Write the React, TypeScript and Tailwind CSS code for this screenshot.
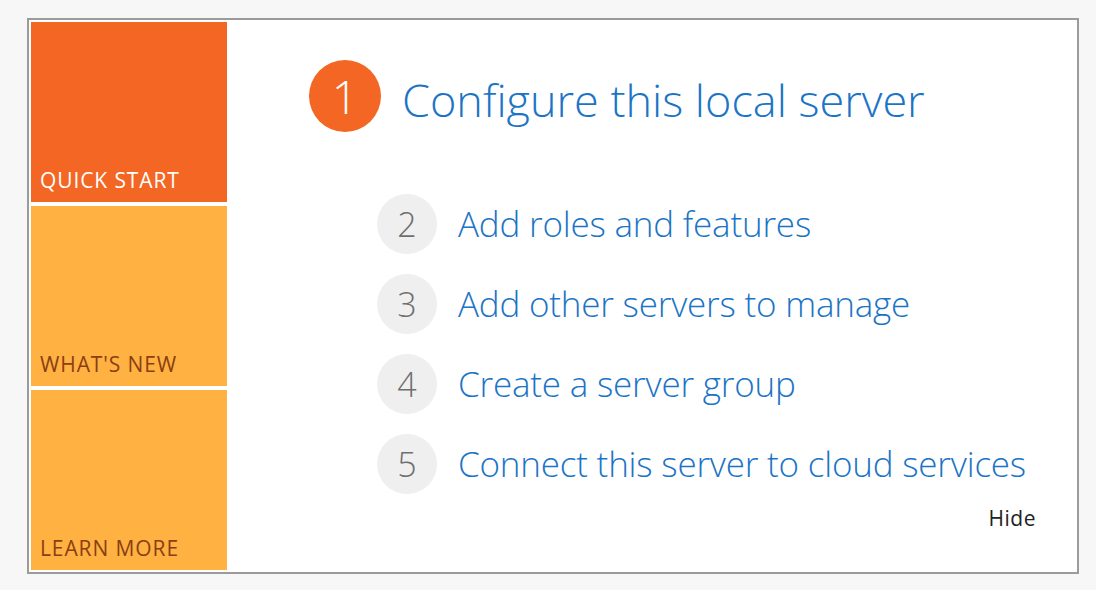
import React from "react";

const font = { fontFamily: '"Open Sans", "Noto Sans", sans-serif' };

function Tile({ label, bg, text }: { label: string; bg: string; text: string }) {
  return (
    <div className={`h-[180px] w-[196px] flex items-end pl-[9px] pb-[10px] ${bg}`}>
      <span className={`text-[21px] leading-[24px] tracking-[0.9px] ${text}`}>{label}</span>
    </div>
  );
}

const steps = [
  { n: "2", t: "Add roles and features" },
  { n: "3", t: "Add other servers to manage" },
  { n: "4", t: "Create a server group" },
  { n: "5", t: "Connect this server to cloud services" },
];

export default function App() {
  return (
    <div className="w-[1096px] h-[590px] bg-[#f7f7f7] pl-[27px] pt-[18px]" style={font}>
      <div className="w-[1052px] h-[556px] border-2 border-[#9b9b9b] bg-white p-[2px] flex">
        <div className="flex flex-col gap-[4px]">
          <Tile label="QUICK START" bg="bg-[#f36623]" text="text-white" />
          <Tile label="WHAT'S NEW" bg="bg-[#ffb142]" text="text-[#8a3f12]" />
          <Tile label="LEARN MORE" bg="bg-[#ffb142]" text="text-[#8a3f12]" />
        </div>
        <div className="flex-1 flex flex-col pl-[82px] pt-[38px] pr-[39px]">
          <div className="flex items-center gap-[21px]">
            <div className="w-[72px] h-[72px] rounded-full bg-[#f36623] flex items-center justify-center">
              <span className="text-white font-light text-[46px] leading-none">1</span>
            </div>
            <span className="text-[#1b74c5] font-light text-[45px] leading-none relative top-[3px]">
              Configure this local server
            </span>
          </div>
          <div className="flex flex-col gap-[20px] pl-[68px] mt-[62px]">
            {steps.map((s) => (
              <div key={s.n} className="flex items-center gap-[21px]">
                <div className="w-[60px] h-[60px] rounded-full bg-[#efefef] flex items-center justify-center">
                  <span className="text-[#6f6f6f] font-light text-[34px] leading-none">{s.n}</span>
                </div>
                <span className="text-[#1b74c5] font-light text-[35px] leading-none tracking-[-0.2px] relative -top-[1px]">{s.t}</span>
              </div>
            ))}
          </div>
          <div className="flex justify-end mt-[12px]">
            <span className="text-[#222] text-[21px] leading-[24px] tracking-[0.5px]">Hide</span>
          </div>
        </div>
      </div>
    </div>
  );
}
